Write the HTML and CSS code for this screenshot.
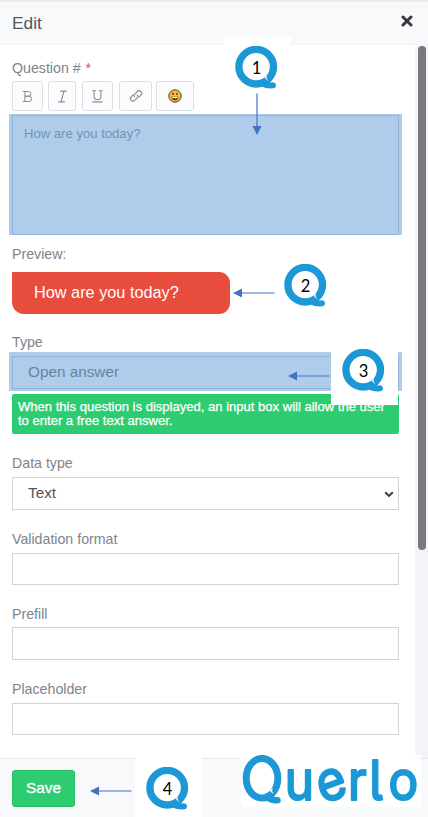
FILE: index.html
```html
<!DOCTYPE html>
<html lang="en">
<head>
<meta charset="utf-8">
<title>Edit</title>
<link rel="stylesheet" href="styles.css">
</head>
<body>
<svg class="defs" width="0" height="0">
  <symbol id="ring" viewBox="0 0 43 43">
    <circle cx="21.2" cy="20.7" r="17.3" fill="#fff" stroke="#1b98d5" stroke-width="7.3"/>
    <path d="M26.5 37Q32 40 38 39.3" fill="none" stroke="#1b98d5" stroke-width="6" stroke-linecap="round"/>
    <path d="M29.6 31.6l2.4-2.6 -.5 2.8 1.7 3.6z" fill="#fff"/>
  </symbol>
  <symbol id="arrow" viewBox="0 0 42 10">
    <path d="M8 5h33.5" stroke="#4472c4" stroke-width="1.2"/>
    <path d="M0 5l9-4.5v9z" fill="#4472c4"/>
  </symbol>
</svg>
<div class="panel">
  <header class="header">
    <h1>Edit</h1>
    <svg class="close" viewBox="0 0 12 12"><path d="M2 2l8 8M10 2l-8 8" stroke="#37393e" stroke-width="3" stroke-linecap="round"/></svg>
  </header>
  <main class="body">
    <form class="form">
      <label class="label">Question # <span class="required">*</span></label>
      <div class="toolbar">
        <span class="tool bold"><svg viewBox="0 0 14 14"><path d="M1 1.2h6.7a2.7 2.7 0 0 1 0 5.5H3.4h4.8a3 3 0 0 1 0 6.1H1M3.4 1.2v11.6"/></svg></span>
        <span class="tool italic"><svg viewBox="0 0 14 14"><path d="M4.5 1.2h7M2.5 12.8h7M8.6 1.2l-3.2 11.6"/></svg></span>
        <span class="tool underline"><svg viewBox="0 0 14 14"><path d="M1.5 .8h4M8.5 .8h4M3.3 .8v5.8a3.7 3.7 0 0 0 7.4 0V.8M1.5 12.8h11"/></svg></span>
        <span class="tool link"><svg viewBox="0 0 14 14"><path d="M6 8.4a2.5 2.5 0 0 1 0-3.5l2.3-2.3a2.5 2.5 0 0 1 3.6 3.6L9.7 8.4M8 5.6a2.5 2.5 0 0 1 0 3.5l-2.3 2.3a2.5 2.5 0 0 1-3.6-3.6l2.2-2.2"/></svg></span>
        <span class="tool emoji"><svg viewBox="0 0 14 14"><circle cx="7" cy="7" r="6.2" fill="#f6c13b" stroke="#4d431f" stroke-width="1"/><path d="M3.4 7.8h7.2a3.6 3.4 0 0 1-7.2 0z" fill="#4b3518" stroke="none"/><path d="M4.2 8h5.6v1.2H4.2z" fill="#fff" stroke="none"/><path d="M5 3.8v2.2M9 3.8v2.2" stroke="#3b3015" stroke-width="1.3"/></svg></span>
      </div>
      <div class="highlight question"><div class="textarea">How are you today?</div></div>
      <label class="label preview-label">Preview:</label>
      <div class="bubble">How are you today?</div>
      <label class="label type-label">Type</label>
      <div class="highlight type"><div class="field">Open answer</div></div>
      <p class="help">When this question is displayed, an input box will allow the user to enter a free text answer.</p>
      <label class="label data-label">Data type</label>
      <div class="field select">Text
        <svg class="chevron" viewBox="0 0 10 7"><path d="M1.2 1.2L5 4.9l3.8-3.7" fill="none" stroke="#3b3d41" stroke-width="2"/></svg>
      </div>
      <label class="label gap">Validation format</label>
      <div class="field short"></div>
      <label class="label gap">Prefill</label>
      <div class="field"></div>
      <label class="label gap">Placeholder</label>
      <div class="field short"></div>
    </form>
    <div class="scrollbar"><div class="thumb"></div></div>
  </main>
  <footer class="footer"><button class="save" type="button">Save</button></footer>

  <div class="note note-1"><svg><use href="#ring"/></svg><span>1</span></div>
  <div class="note note-2"><svg><use href="#ring"/></svg><span>2</span></div>
  <div class="note note-3"><svg><use href="#ring"/></svg><span>3</span></div>
  <div class="note note-4"><svg><use href="#ring"/></svg><span>4</span></div>
  <svg class="arrow arrow-1"><use href="#arrow"/></svg>
  <svg class="arrow arrow-2"><use href="#arrow"/></svg>
  <svg class="arrow arrow-3"><use href="#arrow"/></svg>
  <svg class="arrow arrow-4"><use href="#arrow"/></svg>
  <svg class="brand" viewBox="0 0 180 52">
    <ellipse cx="21" cy="23.2" rx="15.8" ry="19.8" fill="none" stroke="#1b98d5" stroke-width="7"/>
    <path d="M26 41.8Q31 46 36.5 45.2" fill="none" stroke="#1b98d5" stroke-width="6.5" stroke-linecap="round"/>
    <path d="M28.8 36l2.8-3.2-.4 3.4 1.6 3z" fill="#fff"/>
    <text transform="scale(.9 1)" y="45.4 49 45.4 45.4 45.4" x="48.5 90 119 142.5 164" rotate="0 -18 0 0 0">uerlo</text>
  </svg>
</div>
</body>
</html>
```

FILE: styles.css
```css
* { box-sizing: border-box; }
body {
  margin: 0;
  font-family: "Liberation Sans", Arial, sans-serif;
  color: #7c858d;
}
.defs { position: absolute; }
.panel {
  position: relative;
  width: 428px;
  height: 817px;
  overflow: hidden;
  display: flex;
  flex-direction: column;
  background: #fff;
}
.header {
  height: 45px;
  flex: none;
  display: flex;
  align-items: center;
  justify-content: space-between;
  padding: 0 15px 0 12px;
  background: #f8f9fb;
  border-top: 2px solid #ebecee;
  border-bottom: 1px solid #f2f3f6;
}
h1 {
  margin: 0;
  font-size: 17.3px;
  font-weight: 400;
  color: #53565a;
}
.close { width: 12px; height: 12px; margin-top: -4px; }
.body { flex: 1; display: flex; justify-content: space-between; min-height: 0; }
.form {
  width: 387px;
  margin-left: 12px;
  padding-top: 13px;
  display: flex;
  flex-direction: column;
}
.label { height: 20px; line-height: 20px; font-size: 14.2px; flex: none; }
.required { margin-left: 1px; color: #e04a45; }
.toolbar { display: flex; height: 30px; margin-top: 3px; flex: none; }
.tool {
  display: flex;
  align-items: center;
  justify-content: center;
  background: #fcfcfd;
  border: 1px solid #dcdfe7;
  border-radius: 3px;
}
.tool svg {
  width: 14px;
  height: 14px;
  fill: none;
  stroke: #858b93;
  stroke-width: 1.15;
}
.bold { width: 31px; margin-right: 5px; }
.bold svg { width: 12px; height: 13px; }
.italic { width: 28px; margin-right: 6px; }
.italic svg { width: 13px; height: 13px; }
.underline { width: 31px; margin-right: 6px; }
.underline svg { width: 13px; height: 13px; }
.link { width: 33px; margin-right: 4px; }
.emoji { width: 38px; }
.highlight { margin: 0 -3px; background: #afcdea; flex: none; }
.question { height: 121px; margin-top: 3px; padding: 1px 3px 0; }
.textarea {
  height: 120px;
  padding: 10px 11px;
  border: 1px solid #90b4d8;
  font-size: 13.1px;
  line-height: 16px;
  color: #6f93b5;
}
.preview-label { margin-top: 9px; }
.bubble {
  width: 218px;
  height: 42px;
  margin-top: 8px;
  padding-left: 22px;
  line-height: 41px;
  font-size: 16.3px;
  color: #fff;
  background: #e74c3d;
  border-radius: 0 11px 11px 12px;
  flex: none;
}
.type-label { margin-top: 18px; }
.type { height: 39px; padding: 4px 3px 2px; }
.field {
  height: 33px;
  flex: none;
  display: flex;
  align-items: center;
  padding: 0 3px 1px 15px;
  border: 1px solid #ced5db;
  font-size: 15.3px;
}
.short { height: 32px; }
.type .field { border-color: #90b4d8; color: #6584a3; }
.help {
  height: 40px;
  margin: 3px 0 0;
  padding: 6px 6px;
  font-size: 13.05px;
  line-height: 14px;
  color: #fff;
  -webkit-text-stroke: .25px #fff;
  background: #2ecc71;
  border-radius: 2px;
  flex: none;
}
.data-label { margin-top: 19px; }
.data-label + .field { margin-top: 4px; }
.select { justify-content: space-between; color: #53565a; }
.chevron { width: 10px; height: 7px; margin: 2px 1px 0 0; }
.gap { margin-top: 19px; }
.gap + .field { margin-top: 4px; }
.gap + .field:not(.short) { margin-top: 3px; }
.scrollbar { width: 13px; padding: 1px 2px 0 3px; background: #f3f4f8; }
.thumb { height: 504px; background: #78797c; border-radius: 4px; }
.footer {
  height: 59px;
  flex: none;
  padding: 11px 12px;
  background: #f8f9fb;
  border-top: 1px solid #e6e9ed;
}
.save {
  width: 63px;
  height: 37px;
  padding: 0 0 2px;
  border: 1px solid #28bd66;
  border-radius: 3px;
  background: #2ecc71;
  color: #fff;
  font: 15.3px "Liberation Sans", Arial, sans-serif;
  -webkit-text-stroke: .3px #fff;
}
.note {
  position: absolute;
  width: 67px;
  height: 65px;
  padding: 9px 11px;
  background: #fff;
}
.note svg { display: block; width: 43px; height: 43px; }
.note span {
  position: absolute;
  left: 11px;
  top: 20px;
  width: 43px;
  text-align: center;
  font: 16.5px/22px Lato, sans-serif;
  color: #000;
}
.note-1 { left: 224px; top: 37px; }
.note-2 { left: 273px; top: 255px; }
.note-3 { left: 331px; top: 340px; }
.note-4 { left: 135px; top: 758px; }
.arrow { position: absolute; width: 42px; height: 10px; }
.arrow-1 { left: 235.5px; top: 109px; transform: rotate(-90deg); }
.arrow-2 { left: 233px; top: 287.5px; }
.arrow-3 { left: 288px; top: 370.5px; }
.arrow-4 { left: 90px; top: 785.5px; }
.brand {
  position: absolute;
  left: 241px;
  top: 755px;
  width: 180px;
  height: 52px;
  background: #fff;
}
.brand text {
  font-family: Inter, sans-serif;
  font-size: 55px;
  font-weight: 400;
  font-feature-settings: "cv05";
  fill: #1b98d5;
  stroke: #1b98d5;
  stroke-width: 2.2px;
  stroke-linejoin: round;
}
```
